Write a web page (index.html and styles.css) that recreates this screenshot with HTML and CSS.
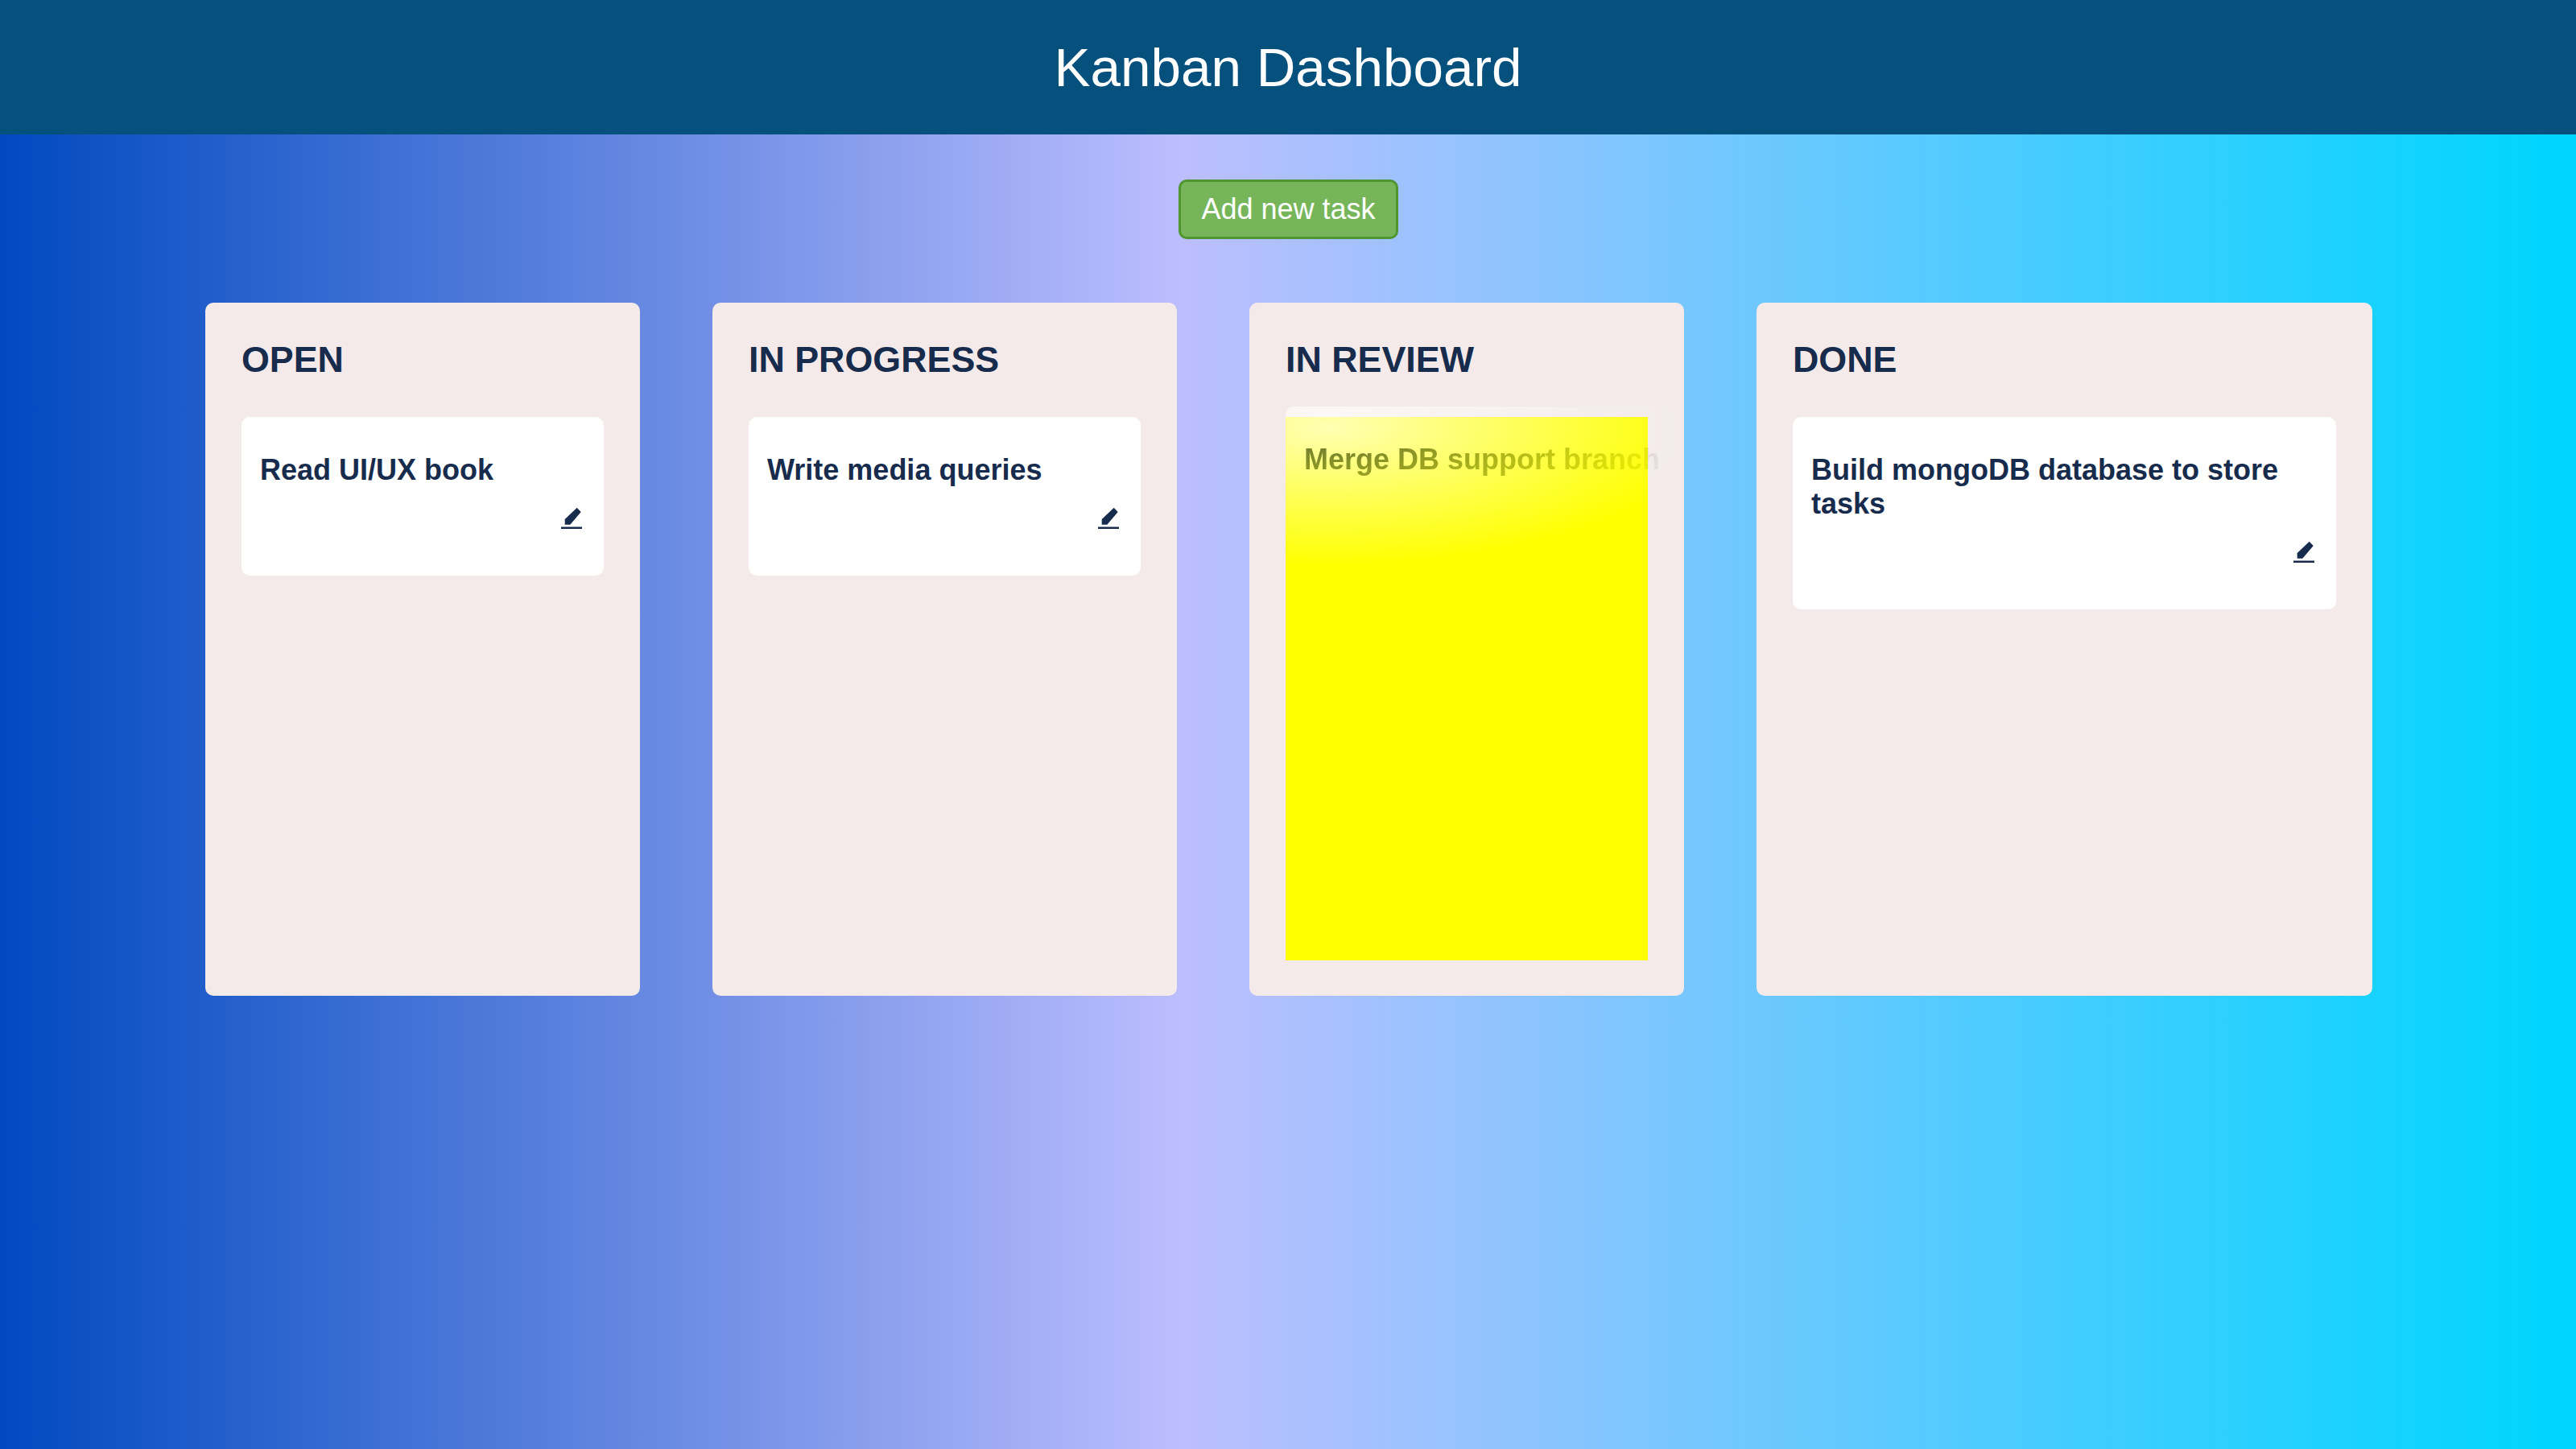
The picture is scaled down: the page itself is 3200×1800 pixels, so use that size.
FILE: index.html
```html
<!DOCTYPE html>
<html>
	<head>
		<meta charset="utf-8">
		<title>Kanban Dashboard</title>
		<link rel="stylesheet" href="styles.css">
	</head>
	<body>
		<header class="top-bar">
			<h1>Kanban Dashboard</h1>
		</header>

		<div class="actions">
			<button class="add-btn">Add new task</button>
		</div>

		<main class="board">
			<section class="column col-open">
				<h2>OPEN</h2>
				<div class="card">
					<h3>Read UI/UX book</h3>
					<div class="card-foot">
						<svg class="pencil" viewBox="0 0 26 27"><path d="M19.7 .7l5 5.3L11.3 21.7H4.7V15z"/><rect y="24.5" width="26" height="3"/></svg>
					</div>
				</div>
			</section>

			<section class="column col-progress">
				<h2>IN PROGRESS</h2>
				<div class="card">
					<h3>Write media queries</h3>
					<div class="card-foot">
						<svg class="pencil" viewBox="0 0 26 27"><path d="M19.7 .7l5 5.3L11.3 21.7H4.7V15z"/><rect y="24.5" width="26" height="3"/></svg>
					</div>
				</div>
			</section>

			<section class="column col-review">
				<h2>IN REVIEW</h2>
				<div class="drop-zone">
					<div class="card drag-ghost">
						<h3>Merge DB support branch</h3>
						<div class="card-foot">
							<svg class="pencil" viewBox="0 0 26 27"><path d="M19.7 .7l5 5.3L11.3 21.7H4.7V15z"/><rect y="24.5" width="26" height="3"/></svg>
						</div>
					</div>
				</div>
			</section>

			<section class="column col-done">
				<h2>DONE</h2>
				<div class="card">
					<h3>Build mongoDB database to store tasks</h3>
					<div class="card-foot">
						<svg class="pencil" viewBox="0 0 26 27"><path d="M19.7 .7l5 5.3L11.3 21.7H4.7V15z"/><rect y="24.5" width="26" height="3"/></svg>
					</div>
				</div>
			</section>
		</main>
	</body>
</html>
```

FILE: styles.css
```css
html, body {
	margin: 0;
	padding: 0;
}

body {
	min-height: 1800px;
	background: linear-gradient(90deg, #0049c0 0%, #bcbefe 46%, #00d5ff 99%);
	font-family: "Liberation Sans", Arial, sans-serif;
	color: #172b4d;
}

.top-bar {
	height: 167px;
	background-color: #06507e;
	display: flex;
	align-items: center;
	justify-content: center;
}

.top-bar h1 {
	margin: 0;
	font-size: 67.4px;
	font-weight: normal;
	color: white;
}

.actions {
	display: flex;
	justify-content: center;
	padding-top: 56px;
	padding-bottom: 79px;
	padding-left: 1px;
}

.add-btn {
	width: 273px;
	height: 74px;
	padding: 0;
	box-sizing: border-box;
	border: 3px solid #4f9630;
	border-radius: 10px;
	background-color: #77b55a;
	color: white;
	font-family: inherit;
	font-size: 36px;
}

.board {
	display: flex;
	justify-content: center;
	gap: 90px;
	padding-left: 2px;
}

.column {
	box-sizing: border-box;
	height: 861px;
	padding: 45px 45px 44px 45px;
	border-radius: 10px;
	background-color: #f4eaea;
	display: flex;
	flex-direction: column;
}

.col-open, .col-review {
	width: 540px;
}

.col-progress {
	width: 577px;
}

.col-done {
	width: 765px;
}

.column h2 {
	margin: 0 0 46px 0;
	font-size: 44.8px;
	line-height: 51px;
	font-weight: bold;
}

.card {
	box-sizing: border-box;
	padding: 45px 27px 57px 23px;
	border-radius: 10px;
	background-color: white;
}

.card h3 {
	margin: 0;
	font-size: 36px;
	line-height: 42px;
	font-weight: bold;
}

.card-foot {
	display: flex;
	justify-content: flex-end;
	margin-top: 25px;
	margin-bottom: 1px;
}

.pencil {
	display: block;
	width: 26px;
	height: 27px;
	fill: #172b4d;
}

.drop-zone {
	flex: 1;
	position: relative;
	background-color: yellow;
}

.drag-ghost {
	position: absolute;
	top: -13px;
	left: 0;
	width: 487px;
	white-space: nowrap;
	-webkit-mask-image: radial-gradient(ellipse 470px 172px at 53px 25px, rgba(0, 0, 0, 0.7), transparent);
	mask-image: radial-gradient(ellipse 470px 172px at 53px 25px, rgba(0, 0, 0, 0.7), transparent);
}
```
